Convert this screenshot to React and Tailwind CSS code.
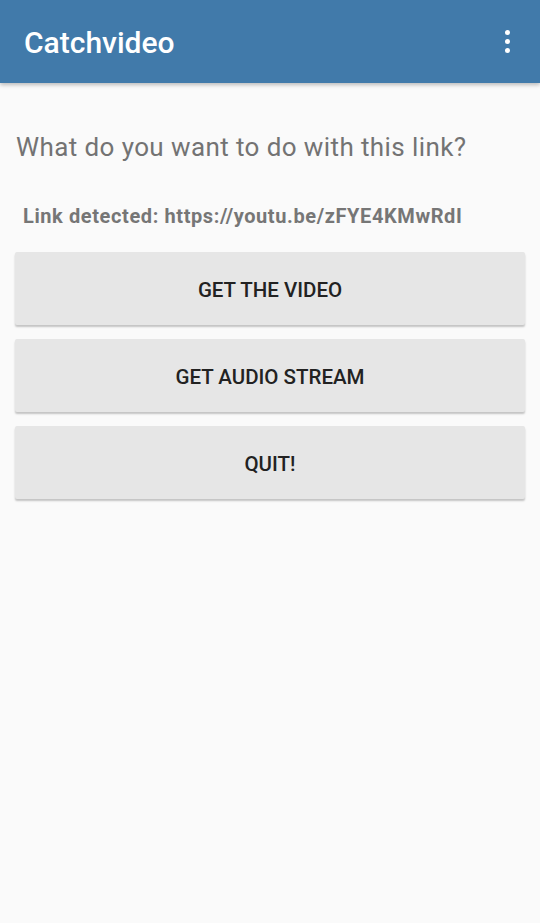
import { useState } from 'react';

const ACTIONS = ['GET THE VIDEO', 'GET AUDIO STREAM', 'QUIT!'];

export default function App() {
  const [link] = useState('https://youtu.be/zFYE4KMwRdI');

  return (
    <div
      className="min-h-[923px] w-full bg-[#fafafa]"
      style={{ fontFamily: 'Roboto, "Noto Sans", sans-serif' }}
    >
      <header className="relative z-10 flex h-[83px] items-center justify-between bg-[#417aaa] pl-[24px] pr-[30px] shadow-[0_2px_4px_rgba(0,0,0,0.25)]">
        <h1 className="pt-[2px] text-[30px] font-medium leading-none text-white">Catchvideo</h1>
        <button className="flex flex-col items-center gap-[4px] py-1" aria-label="More options">
          <span className="h-[5px] w-[5px] rounded-full bg-white" />
          <span className="h-[5px] w-[5px] rounded-full bg-white" />
          <span className="h-[5px] w-[5px] rounded-full bg-white" />
        </button>
      </header>

      <main className="px-[15px]">
        <p className="mt-[49px] pl-[1px] text-[26px] leading-[30px] tracking-[0.4px] text-[#737373]">
          What do you want to do with this link?
        </p>
        <p className="mt-[42px] pl-[8px] text-[20px] font-bold leading-[24px] tracking-[0.6px] text-[#767676]">
          Link detected: {link}
        </p>

        <div className="mt-[24px] flex flex-col gap-[14px]">
          {ACTIONS.map((label) => (
            <button
              key={label}
              className="flex h-[73px] w-full items-center justify-center rounded-[2px] bg-[#e6e6e6] pt-[3px] text-[20.5px] font-medium text-[#222222] shadow-[0_2px_2px_rgba(0,0,0,0.22)]"
            >
              {label}
            </button>
          ))}
        </div>
      </main>
    </div>
  );
}
